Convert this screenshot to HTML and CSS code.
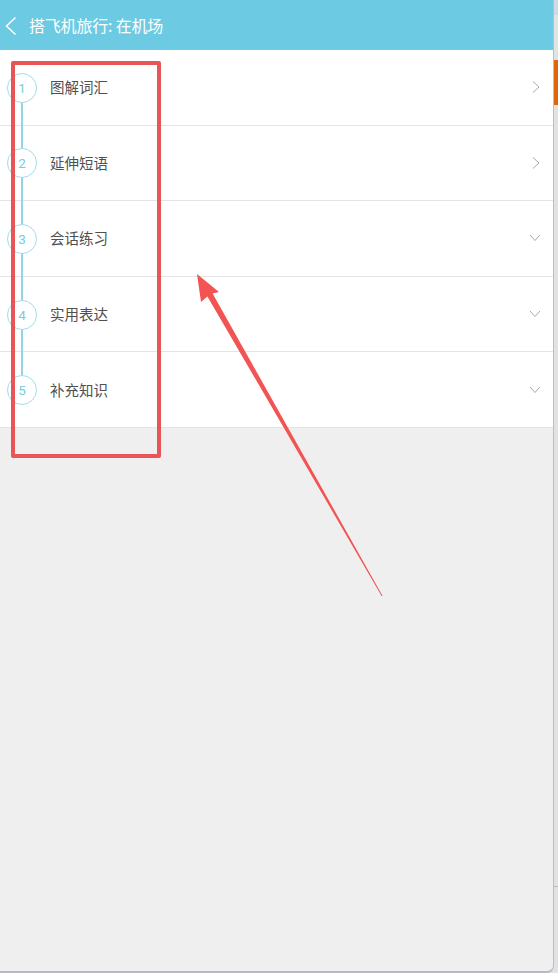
FILE: index.html
```html
<!DOCTYPE html>
<html lang="zh">
<head>
<meta charset="utf-8">
<title>搭飞机旅行: 在机场</title>
<link rel="stylesheet" href="styles.css">
</head>
<body>
<div class="screen">
  <header class="topbar">
    <svg class="back" width="13" height="20" viewBox="0 0 13 20"><polyline points="11.5,1.5 2.5,10 11.5,18.5" fill="none" stroke="#fff" stroke-width="1.5"/></svg>
    <span class="title">搭飞机旅行: 在机场</span>
  </header>
  <ul class="list">
    <li class="row first">
      <div class="track"><span class="seg"></span><span class="num">1</span><span class="seg"></span></div>
      <span class="label">图解词汇</span>
      <svg class="chev" width="10" height="14" viewBox="0 0 10 14"><polyline points="2,1.5 8,7 2,12.5" fill="none" stroke="#a9a9a9" stroke-width="1"/></svg>
    </li>
    <li class="row">
      <div class="track"><span class="seg"></span><span class="num">2</span><span class="seg"></span></div>
      <span class="label">延伸短语</span>
      <svg class="chev" width="10" height="14" viewBox="0 0 10 14"><polyline points="2,1.5 8,7 2,12.5" fill="none" stroke="#a9a9a9" stroke-width="1"/></svg>
    </li>
    <li class="row">
      <div class="track"><span class="seg"></span><span class="num">3</span><span class="seg"></span></div>
      <span class="label">会话练习</span>
      <svg class="chev" width="12" height="10" viewBox="0 0 12 10"><polyline points="1,2 6,7.5 11,2" fill="none" stroke="#a9a9a9" stroke-width="1"/></svg>
    </li>
    <li class="row">
      <div class="track"><span class="seg"></span><span class="num">4</span><span class="seg"></span></div>
      <span class="label">实用表达</span>
      <svg class="chev" width="12" height="10" viewBox="0 0 12 10"><polyline points="1,2 6,7.5 11,2" fill="none" stroke="#a9a9a9" stroke-width="1"/></svg>
    </li>
    <li class="row last">
      <div class="track"><span class="seg"></span><span class="num">5</span><span class="seg"></span></div>
      <span class="label">补充知识</span>
      <svg class="chev" width="12" height="10" viewBox="0 0 12 10"><polyline points="1,2 6,7.5 11,2" fill="none" stroke="#a9a9a9" stroke-width="1"/></svg>
    </li>
  </ul>
</div>
<div class="strip">
  <span class="strip-top"></span>
  <span class="strip-tab"></span>
  <span class="strip-line"></span>
</div>
<div class="mark-box"></div>
<svg class="mark-arrow" width="558" height="973" viewBox="0 0 558 973">
  <polygon points="197,274 219,292 212.6,293.5 382.6,596 381.6,596 207.4,296.5 201,302" fill="#f25454"/>
</svg>
</body>
</html>
```

FILE: styles.css
```css
html, body {
  margin: 0;
  padding: 0;
}
body {
  width: 558px;
  height: 973px;
  display: flex;
  background: #e4e4e6;
  font-family: "Noto Sans CJK SC", "Noto Sans", "Liberation Sans", sans-serif;
  overflow: hidden;
}
.screen {
  width: 553px;
  height: 971px;
  flex: none;
  background: #efefef;
  border-right: 1px solid #bdbdc2;
  border-bottom: 2px solid #b8b8c8;
  border-bottom-right-radius: 7px;
  overflow: hidden;
}
.topbar {
  height: 50px;
  background: #6ccae2;
  display: flex;
  align-items: center;
  padding-left: 4px;
  gap: 12px;
  color: #fff;
}
.back {
  display: block;
  margin-top: 1px;
}
.title {
  font-size: 16px;
  line-height: 20px;
  letter-spacing: -0.2px;
}
.list {
  list-style: none;
  margin: 0;
  padding: 0;
  background: #fff;
}
.row {
  box-sizing: border-box;
  height: 75.6px;
  border-bottom: 1px solid #e4e4e4;
  display: flex;
  align-items: center;
  padding-left: 7px;
  padding-right: 12px;
}
.track {
  align-self: stretch;
  width: 30px;
  display: flex;
  flex-direction: column;
  align-items: center;
  margin-bottom: -1px;
}
.seg {
  flex: 1;
  width: 2px;
  background: #93d5e6;
}
.first .seg:first-child,
.last .seg:last-child {
  background: transparent;
}
.num {
  box-sizing: border-box;
  width: 30px;
  height: 30px;
  border: 1px solid #a3dbea;
  border-radius: 50%;
  display: flex;
  align-items: center;
  justify-content: center;
  font-family: "Roboto", "Noto Sans", sans-serif;
  font-size: 13.5px;
  color: #7ccbe0;
  background: #fff;
}
.label {
  flex: 1;
  margin-left: 13px;
  font-size: 14.5px;
  color: #505050;
  line-height: 20px;
}
.chev {
  display: block;
}
.strip {
  flex: 1;
  display: flex;
  flex-direction: column;
  background: #e2e2e4;
}
.strip-top {
  height: 15px;
  background: #d3d9e2;
}
.strip-tab {
  height: 45px;
  margin-top: 45px;
  background: #e0650f;
}
.strip-line {
  height: 1px;
  margin-top: 781px;
  background: #b9b9bd;
}
.mark-box {
  position: absolute;
  left: 11px;
  top: 61px;
  width: 142px;
  height: 389px;
  border: 4px solid #e95556;
  border-radius: 2px;
}
.mark-arrow {
  position: absolute;
  left: 0;
  top: 0;
  pointer-events: none;
}
```
